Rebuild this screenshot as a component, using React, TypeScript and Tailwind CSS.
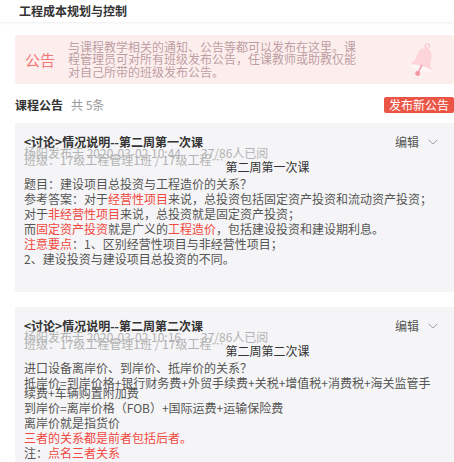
import React from "react";

const R = ({ children }: { children: React.ReactNode }) => (
  <span className="text-[#f0483e]">{children}</span>
);

function Chevron() {
  return (
    <svg width="10" height="6" viewBox="0 0 10 6" className="ml-[9px]">
      <path d="M0.5 0.8 L5 5 L9.5 0.8" fill="none" stroke="#9aa3b5" strokeWidth="1" />
    </svg>
  );
}

function Bell() {
  return (
    <svg width="36" height="40" viewBox="0 0 36 40" className="absolute left-[390px] top-[6px]">
      <g transform="rotate(16 18 20)">
        <circle cx="18" cy="4.5" r="2.2" fill="none" stroke="#fbc9cf" strokeWidth="1.2" />
        <path d="M18 7 C11.5 7 10.5 13 10.5 18.5 C10.5 22 8 25 5.5 27.5 L30.5 27.5 C28 25 25.5 22 25.5 18.5 C25.5 13 24.5 7 18 7 Z" fill="#fdd5d9" />
        <path d="M4.5 27.5 Q18 22.5 31.5 27.5 Q18 32.5 4.5 27.5 Z" fill="#fff6f6" />
        <line x1="18" y1="24" x2="16.5" y2="32.5" stroke="#f497a6" strokeWidth="1.3" />
        <circle cx="16.3" cy="33.5" r="2.4" fill="#f497a6" />
      </g>
    </svg>
  );
}

function Card({
  title,
  time,
  sub,
  lines,
  className,
}: {
  title: string;
  time: string;
  sub: string;
  lines: React.ReactNode[];
  className: string;
}) {
  return (
    <div className={"bg-[#f5f5f7] pl-[9px] pr-[14px] pt-[13px] " + className}>
      <div className="flex items-center justify-between">
        <div className="text-[12px] leading-[12px] font-semibold text-[#333]">{title}</div>
        <div className="flex items-center text-[12px] leading-[12px] text-[#555] mr-[2px]">
          编辑
          <Chevron />
        </div>
      </div>
      <div className="mt-[1px] h-[7px] leading-[7px] text-[12px] text-[#b3b3b3] whitespace-nowrap">
        杨阳发布于 2020-03-02 {time}
        <span className="ml-[20px]">37/86人已阅</span>
      </div>
      <div className="h-[7px] leading-[7px] text-[12px] whitespace-nowrap">
        <span className="text-[#b3b3b3]">班级：17级工程管理1班 / 17级工程…</span>
        <span className="inline-block translate-y-[7px] text-[#333] ml-[2px]">{sub}</span>
      </div>
      <div className="mt-[13px] text-[12px] leading-[10px] text-[#555]">
        {lines.map((l, i) => (
          <div key={i} className="pt-[2.5px] pb-[2.5px]">
            {l}
          </div>
        ))}
      </div>
    </div>
  );
}

export default function App() {
  return (
    <div className="w-[454px] h-[462px] overflow-hidden bg-white font-['Noto_Sans_CJK_SC',sans-serif]">
      <div className="h-[22px] pl-[19px] text-[12px] leading-[22px] font-semibold text-[#333] shadow-[0_1px_3px_rgba(0,0,0,0.07)]">
        工程成本规划与控制
      </div>
      <div className="pl-[15px]">
        <div className="relative mt-[13px] h-[49px] rounded-[3px] bg-[#fdeeee] flex items-center">
          <div className="pl-[10px] w-[53px] text-[15px] leading-[15px] text-[#f27777]">公告</div>
          <div className="w-[292px] text-[12px] leading-[12.5px] text-[#bd9ea3]">
            与课程教学相关的通知、公告等都可以发布在这里。课程管理员可对所有班级发布公告，任课教师或助教仅能对自己所带的班级发布公告。
          </div>
          <Bell />
        </div>
        <div className="mt-[13px] h-[16px] flex items-center justify-between">
          <div className="text-[12px] leading-[16px]">
            <span className="font-semibold text-[#333]">课程公告</span>
            <span className="ml-[8px] text-[#999]">共 5条</span>
          </div>
          <div className="w-[70px] h-[16px] rounded-[2px] bg-[#ea5545] text-white text-[12px] leading-[16px] text-center">
            发布新公告
          </div>
        </div>
        <Card
          className="mt-[10px] h-[169px]"
          title="<讨论>情况说明--第二周第一次课"
          time="10:44"
          sub="第二周第一次课"
          lines={[
            "题目：建设项目总投资与工程造价的关系？",
            <>参考答案：对于<R>经营性项目</R>来说，总投资包括固定资产投资和流动资产投资；</>,
            <>对于<R>非经营性项目</R>来说，总投资就是固定资产投资；</>,
            <>而<R>固定资产投资</R>就是广义的<R>工程造价</R>，包括建设投资和建设期利息。</>,
            <><R>注意要点</R>：1、区别经营性项目与非经营性项目；</>,
            "2、建设投资与建设项目总投资的不同。",
          ]}
        />
        <Card
          className="mt-[15px] h-[200px]"
          title="<讨论>情况说明--第二周第二次课"
          time="10:16"
          sub="第二周第二次课"
          lines={[
            "进口设备离岸价、到岸价、抵岸价的关系？",
            "抵岸价=到岸价格+银行财务费+外贸手续费+关税+增值税+消费税+海关监管手续费+车辆购置附加费",
            "到岸价=离岸价格（FOB）+国际运费+运输保险费",
            "离岸价就是指货价",
            <R>三者的关系都是前者包括后者。</R>,
            <>注：<R>点名三者关系</R></>,
          ]}
        />
      </div>
    </div>
  );
}
